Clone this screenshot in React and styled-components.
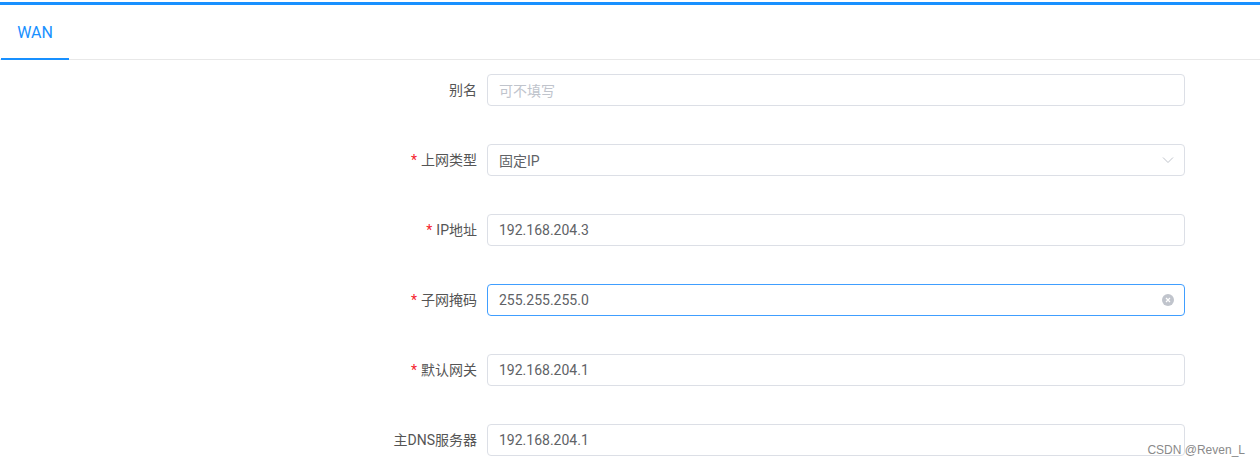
import React from "react";
import styled, { createGlobalStyle } from "styled-components";

const Global = createGlobalStyle`
  html, body { margin: 0; padding: 0; background: #fff; }
  body { font-family: Roboto, "Noto Sans CJK SC", sans-serif; overflow: hidden; }
  * { box-sizing: border-box; }
`;

const Page = styled.div`
  position: relative;
  width: 1260px;
  height: 467px;
  overflow: hidden;
`;

const TopBar = styled.div`
  margin-top: 2px;
  height: 3px;
  background: #1890ff;
`;

const Nav = styled.div`
  display: flex;
  height: 55px;
  border-bottom: 1px solid #e8e8e8;
  padding-left: 1px;
`;

const Tab = styled.div`
  position: relative;
  width: 68px;
  display: flex;
  align-items: center;
  justify-content: center;
  font-size: 16px;
  color: #1890ff;
  &::after {
    content: "";
    position: absolute;
    left: 0;
    right: 0;
    bottom: -1px;
    height: 2px;
    background: #1890ff;
  }
`;

const Form = styled.div`
  width: 798px;
  margin-left: 387px;
  padding-top: 14px;
  display: flex;
  flex-direction: column;
  gap: 38px;
`;

const Item = styled.div`
  display: flex;
  align-items: center;
`;

const Label = styled.label`
  width: 100px;
  flex: none;
  text-align: right;
  padding-right: 10px;
  font-size: 14px;
  line-height: 32px;
  color: #555;
  white-space: nowrap;
`;

const Star = styled.span`
  color: #f5222d;
  margin-right: 4px;
`;

const Field = styled.div`
  position: relative;
  width: 699px;
  height: 32px;
  border: 1px solid ${(p) => (p.$focus ? "#409eff" : "#dcdfe6")};
  border-radius: 4px;
  display: flex;
  align-items: center;
  padding: 0 30px 0 11px;
  font-size: 14px;
  color: ${(p) => (p.$placeholder ? "#c0c4cc" : "#606266")};
`;

const Suffix = styled.span`
  position: absolute;
  right: 10px;
  top: 0;
  bottom: 0;
  display: flex;
  align-items: center;
`;

const Watermark = styled.div`
  position: absolute;
  right: 15px;
  top: 443px;
  font-size: 12px;
  color: #8a8a8a;
  font-family: "Liberation Sans", Arial, sans-serif;
`;

const Chevron = () => (
  <svg width="12" height="8" viewBox="0 0 12 8">
    <path d="M1 1.5 L6 6.5 L11 1.5" fill="none" stroke="#c0c4cc" strokeWidth="1" />
  </svg>
);

const Clear = () => (
  <svg width="12" height="12" viewBox="0 0 12 12">
    <circle cx="6" cy="6" r="6" fill="#c0c4cc" />
    <path d="M4 4 L8 8 M8 4 L4 8" stroke="#fff" strokeWidth="1.2" />
  </svg>
);

const rows = [
  { label: "别名", value: "可不填写", placeholder: true },
  { label: "上网类型", value: "固定IP", req: true, suffix: <Chevron /> },
  { label: "IP地址", value: "192.168.204.3", req: true },
  { label: "子网掩码", value: "255.255.255.0", req: true, focus: true, suffix: <Clear /> },
  { label: "默认网关", value: "192.168.204.1", req: true },
  { label: "主DNS服务器", value: "192.168.204.1" },
];

export default function App() {
  return (
    <Page>
      <Global />
      <TopBar />
      <Nav>
        <Tab>WAN</Tab>
      </Nav>
      <Form>
        {rows.map((r) => (
          <Item key={r.label}>
            <Label>
              {r.req && <Star>*</Star>}
              {r.label}
            </Label>
            <Field $placeholder={r.placeholder} $focus={r.focus}>
              {r.value}
              {r.suffix && <Suffix>{r.suffix}</Suffix>}
            </Field>
          </Item>
        ))}
      </Form>
      <Watermark>CSDN @Reven_L</Watermark>
    </Page>
  );
}
